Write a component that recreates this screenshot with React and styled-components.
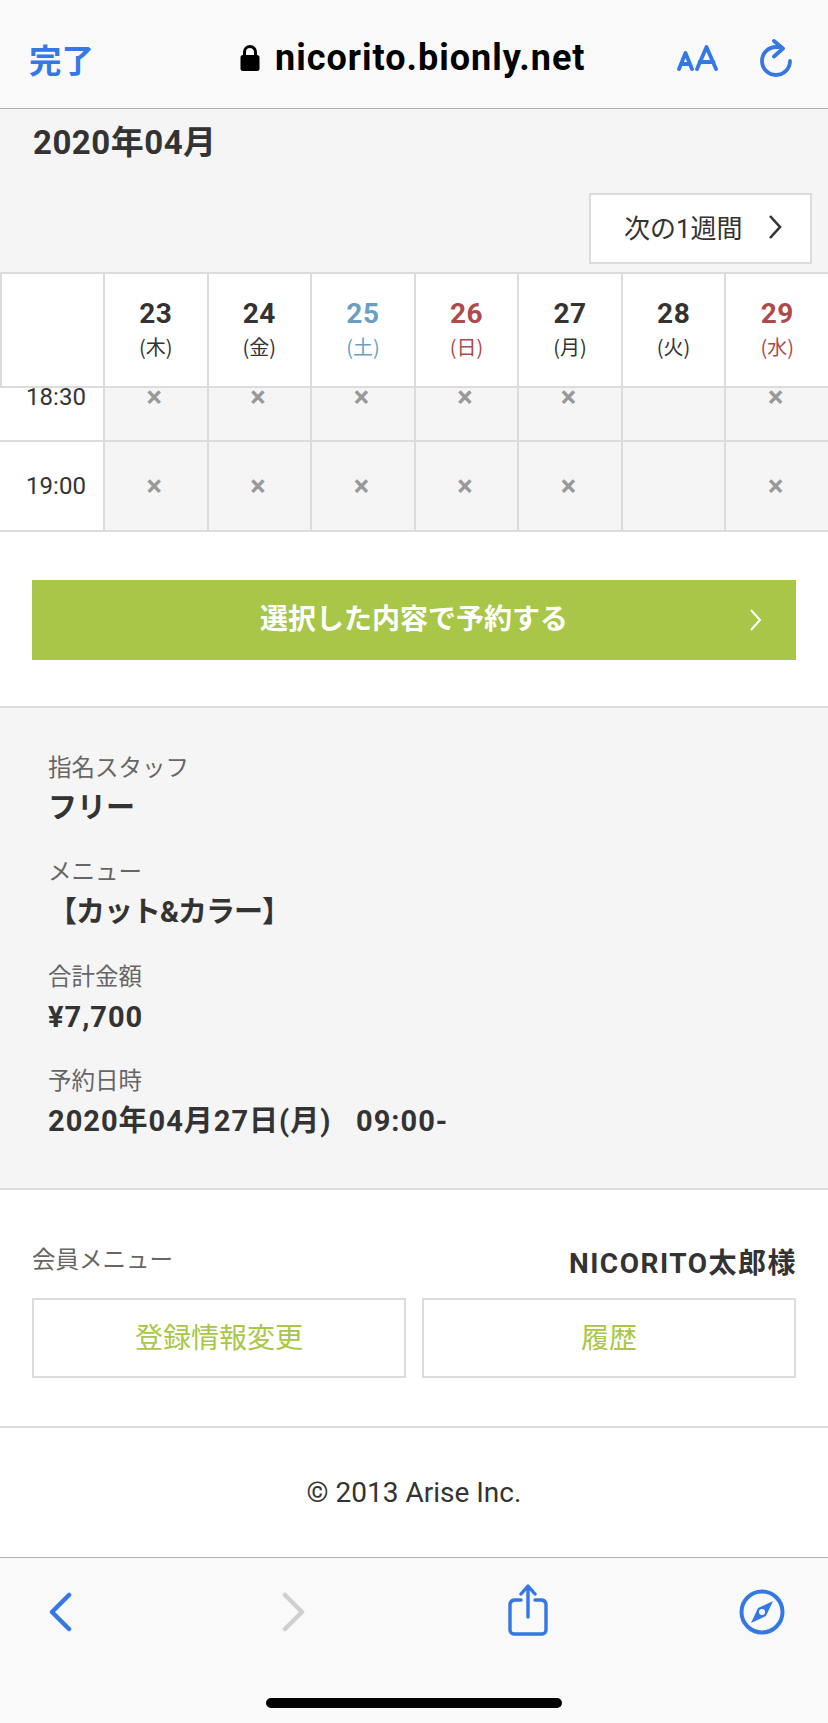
import React from "react";
import styled, { createGlobalStyle } from "styled-components";

const JP = `Roboto, "Noto Sans CJK JP", sans-serif`;
const BLUE = "#3478e5";
const LINE = "#dcdcdc";
const GREEN = "#a8c648";

const GlobalStyle = createGlobalStyle`
  html, body { margin: 0; padding: 0; background: #fff; }
  body { font-family: ${JP}; color: #333; }
  * { box-sizing: border-box; }
`;

const Page = styled.div`
  width: 828px;
  height: 1723px;
  display: flex;
  flex-direction: column;
  overflow: hidden;
`;

const TopBar = styled.header`
  height: 109px;
  flex: none;
  background: #f9f9f9;
  border-bottom: 1px solid #b0b0b0;
  display: flex;
  align-items: center;
  padding: 8px 0 0 29px;
`;

const Done = styled.span`
  width: 211px;
  font: 700 32.5px "Noto Sans CJK JP", sans-serif;
  color: ${BLUE};
`;

const Address = styled.div`
  width: 437px;
  display: flex;
  align-items: center;
  gap: 15px;
  font: 700 36px Roboto, sans-serif;
  letter-spacing: 1px;
  color: #000;
`;

const TopIcons = styled.div`
  display: flex;
  align-items: center;
  gap: 42px;
`;

const CalendarHead = styled.section`
  height: 163px;
  flex: none;
  background: #f5f5f5;
  padding: 15px 16px 0 33px;
  display: flex;
  flex-direction: column;
`;

const MonthTitle = styled.h2`
  margin: 0;
  font: 700 33px/38px ${JP};
  letter-spacing: 0.5px;
  color: #333;
`;

const WeekButton = styled.button`
  align-self: flex-end;
  margin-top: 31px;
  width: 223px;
  height: 71px;
  background: #fff;
  border: 2px solid ${LINE};
  display: flex;
  align-items: center;
  justify-content: space-between;
  padding: 0 27px 4px 33px;
  font: 400 26px ${JP};
  color: #333;
`;

const Grid = styled.div`
  flex: none;
  display: grid;
  grid-template-columns: 103px repeat(7, 1fr);
`;

const HeadCell = styled.div`
  height: 116px;
  background: #fff;
  border: solid ${LINE};
  border-width: 2px 0 2px 2px;
  display: flex;
  flex-direction: column;
  align-items: center;
  padding-top: 23px;
  color: ${(p) => p.$color || "#333"};
`;

const DayNum = styled.span`
  font: 700 28px/34px Roboto, sans-serif;
  letter-spacing: 0.5px;
`;

const DayName = styled.span`
  margin-top: 1px;
  font: 400 20px/30px "Noto Sans CJK JP", sans-serif;
`;

const TimeCell = styled.div`
  height: ${(p) => p.$h}px;
  background: #fff;
  border-bottom: 2px solid ${LINE};
  display: flex;
  align-items: ${(p) => (p.$clipped ? "flex-start" : "center")};
  justify-content: center;
  padding-left: 9px;
  font: 400 24px ${JP};
  line-height: ${(p) => (p.$clipped ? "19px" : "normal")};
  color: #333;
  overflow: hidden;
`;

const SlotCell = styled(TimeCell)`
  background: #f5f5f5;
  border-left: 2px solid ${LINE};
  padding: 0 3px 0 0;
  font-family: Roboto, sans-serif;
  font-size: 29px;
  font-weight: 700;
  line-height: ${(p) => (p.$clipped ? "18px" : "normal")};
  color: #999;
`;

const ReserveArea = styled.section`
  height: 176px;
  flex: none;
  background: #fff;
  border-bottom: 2px solid ${LINE};
  padding: 48px 32px 0;
`;

const ReserveButton = styled.div`
  position: relative;
  height: 80px;
  background: ${GREEN};
  display: flex;
  align-items: center;
  justify-content: center;
  padding-bottom: 7px;
  font: 700 28px "Noto Sans CJK JP", sans-serif;
  color: #fff;
`;

const ReserveChevron = styled.svg`
  position: absolute;
  right: 33px;
  top: 29px;
`;

const Summary = styled.section`
  height: 482px;
  flex: none;
  background: #f5f5f5;
  border-bottom: 2px solid ${LINE};
  padding: 41px 48px 0;
`;

const SummaryItem = styled.div`
  height: 104.3px;
`;

const SummaryLabel = styled.div`
  font: 400 23.5px/34px "Noto Sans CJK JP", sans-serif;
  color: #666;
`;

const SummaryValue = styled.div`
  margin-top: 7px;
  font: 700 29px/36px ${JP};
  letter-spacing: ${(p) => p.$spacing ?? 1}px;
  color: #333;
  white-space: pre;
`;

const Member = styled.section`
  height: 238px;
  flex: none;
  background: #fff;
  border-bottom: 2px solid ${LINE};
  padding: 48px 32px 0;
`;

const MemberHead = styled.div`
  display: flex;
  justify-content: space-between;
  align-items: center;
  height: 44px;
`;

const MemberLabel = styled.span`
  margin-top: -5px;
  font: 400 23.5px "Noto Sans CJK JP", sans-serif;
  color: #666;
`;

const MemberName = styled.span`
  margin: 2px -1px 0 0;
  font: 700 28px ${JP};
  letter-spacing: 1.500px;
  color: #333;
`;

const MemberButtons = styled.div`
  display: grid;
  grid-template-columns: 1fr 1fr;
  gap: 16px;
  margin-top: 16px;
`;

const MemberButton = styled.div`
  height: 80px;
  border: 2px solid ${LINE};
  display: flex;
  align-items: center;
  justify-content: center;
  padding-bottom: 5px;
  font: 400 28px "Noto Sans CJK JP", sans-serif;
  color: ${GREEN};
`;

const Copyright = styled.footer`
  flex: 1;
  background: #fff;
  display: flex;
  align-items: center;
  justify-content: center;
  font: 400 28px Roboto, sans-serif;
  color: #333;
`;

const BottomBar = styled.nav`
  position: relative;
  height: 166px;
  flex: none;
  background: #f9f9f9;
  border-top: 1px solid #b0b0b0;
`;

const ToolRow = styled.div`
  display: grid;
  grid-template-columns: 233px 227px 231px 1fr;
  align-items: center;
  height: 108px;
  padding-left: 48px;
`;

const HomeIndicator = styled.div`
  position: absolute;
  left: 266px;
  bottom: 15px;
  width: 296px;
  height: 10px;
  border-radius: 5px;
  background: #000;
`;

const days = [
  { n: 23, d: "(木)" },
  { n: 24, d: "(金)" },
  { n: 25, d: "(土)", c: "#6a9fc2" },
  { n: 26, d: "(日)", c: "#ad4a4d" },
  { n: 27, d: "(月)" },
  { n: 28, d: "(火)" },
  { n: 29, d: "(水)", c: "#ad4a4d" },
];

const SlotRow = ({ time, h, clipped }) => (
  <>
    <TimeCell $h={h} $clipped={clipped}>{time}</TimeCell>
    {days.map((day) => (
      <SlotCell key={day.n} $h={h} $clipped={clipped}>
        {day.n === 28 ? null : "×"}
      </SlotCell>
    ))}
  </>
);

export default function App() {
  return (
    <Page>
      <GlobalStyle />
      <TopBar>
        <Done>完了</Done>
        <Address>
          <svg width="20" height="28" viewBox="0 0 20 28">
            <path d="M4.500 12V8a5.500 5.500 0 0 1 11 0v4" fill="none" stroke="#000" strokeWidth="3" />
            <rect x="0.500" y="11" width="19" height="16" rx="2.500" fill="#000" />
          </svg>
          nicorito.bionly.net
        </Address>
        <TopIcons>
          <svg width="41" height="26" viewBox="0 0 41 26" fill="none" stroke={BLUE} strokeWidth="3.800" strokeLinecap="round" strokeLinejoin="round">
            <path d="M2 24 8.500 8 15 24M4 19h9" />
            <path d="M20 24 29.500 2 39 24M22.500 17h14" />
          </svg>
          <svg width="32" height="38" viewBox="0 0 32 38" fill="none" stroke={BLUE} strokeWidth="3.800" strokeLinecap="round" strokeLinejoin="round">
            <path d="M30 22a14 14 0 1 1-14-14h3" />
            <path d="M14 2l9 7.500-9 8" />
          </svg>
        </TopIcons>
      </TopBar>

      <CalendarHead>
        <MonthTitle>2020年04月</MonthTitle>
        <WeekButton>
          次の1週間
          <svg width="16" height="26" viewBox="0 0 16 26" fill="none" stroke="#333" strokeWidth="2.600">
            <path d="M3 2l10 11L3 24" />
          </svg>
        </WeekButton>
      </CalendarHead>

      <Grid>
        <HeadCell />
        {days.map((day) => (
          <HeadCell key={day.n} $color={day.c}>
            <DayNum>{day.n}</DayNum>
            <DayName>{day.d}</DayName>
          </HeadCell>
        ))}
        <SlotRow time="18:30" h={54} clipped />
        <SlotRow time="19:00" h={90} />
      </Grid>

      <ReserveArea>
        <ReserveButton>
          選択した内容で予約する
          <ReserveChevron width="14" height="22" viewBox="0 0 14 22" fill="none" stroke="#fff" strokeWidth="2">
            <path d="M2 1l9 10-9 10" />
          </ReserveChevron>
        </ReserveButton>
      </ReserveArea>

      <Summary>
        <SummaryItem>
          <SummaryLabel>指名スタッフ</SummaryLabel>
          <SummaryValue $spacing={0}>フリー</SummaryValue>
        </SummaryItem>
        <SummaryItem>
          <SummaryLabel>メニュー</SummaryLabel>
          <SummaryValue $spacing={-1}>【カット&amp;カラー】</SummaryValue>
        </SummaryItem>
        <SummaryItem>
          <SummaryLabel>合計金額</SummaryLabel>
          <SummaryValue>¥7,700</SummaryValue>
        </SummaryItem>
        <SummaryItem>
          <SummaryLabel>予約日時</SummaryLabel>
          <SummaryValue>2020年04月27日(月)   09:00-</SummaryValue>
        </SummaryItem>
      </Summary>

      <Member>
        <MemberHead>
          <MemberLabel>会員メニュー</MemberLabel>
          <MemberName>NICORITO太郎様</MemberName>
        </MemberHead>
        <MemberButtons>
          <MemberButton>登録情報変更</MemberButton>
          <MemberButton>履歴</MemberButton>
        </MemberButtons>
      </Member>

      <Copyright>© 2013 Arise Inc.</Copyright>

      <BottomBar>
        <ToolRow>
          <svg width="24" height="40" viewBox="0 0 24 40" fill="none" stroke={BLUE} strokeWidth="4.500" strokeLinecap="round" strokeLinejoin="round">
            <path d="M21 3 4 20l17 17" />
          </svg>
          <svg width="24" height="40" viewBox="0 0 24 40" fill="none" stroke="#cfcfcf" strokeWidth="4.500" strokeLinecap="round" strokeLinejoin="round">
            <path d="M4 3l17 17L4 37" />
          </svg>
          <svg width="40" height="56" viewBox="0 0 40 56" fill="none" stroke={BLUE} strokeWidth="3.400" strokeLinecap="round" strokeLinejoin="round">
            <path d="M27 16h6a5 5 0 0 1 5 4v26a4 4 0 0 1-4 4H6a4 4 0 0 1-4-4V20a5 5 0 0 1 5-4h6" />
            <path d="M20 33V3M13 10l7-8 7 8" />
          </svg>
          <svg width="46" height="46" viewBox="0 0 46 46">
            <circle cx="23" cy="23" r="20.500" fill="none" stroke={BLUE} strokeWidth="4" />
            <path fillRule="evenodd" fill={BLUE} d="M34 12 27 27 12 34l7-15zM23 20a3 3 0 1 0 0 6 3 3 0 0 0 0-6z" />
          </svg>
        </ToolRow>
        <HomeIndicator />
      </BottomBar>
    </Page>
  );
}
